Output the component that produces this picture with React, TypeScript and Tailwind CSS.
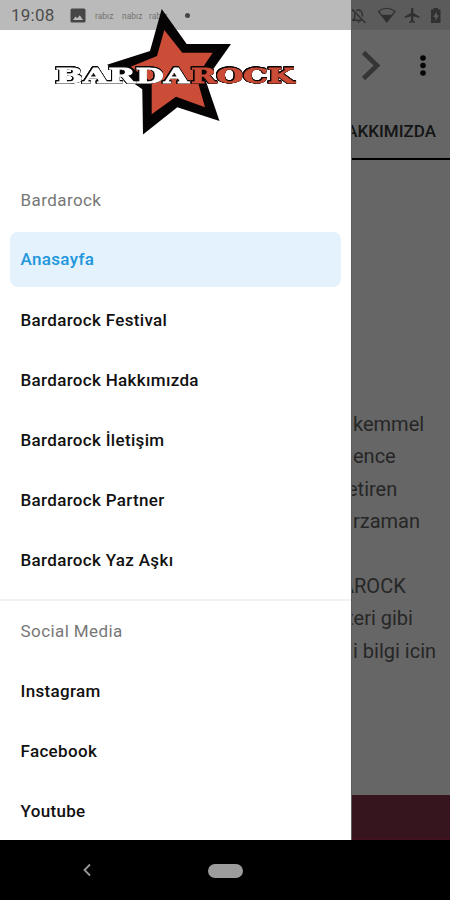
const primaryLinks = [
  "Bardarock Festival",
  "Bardarock Hakkımızda",
  "Bardarock İletişim",
  "Bardarock Partner",
  "Bardarock Yaz Aşkı",
];
const socialLinks = ["Instagram", "Facebook", "Youtube"];

function Logo() {
  return (
    <svg className="absolute left-0 top-0" width="351" height="150" viewBox="0 0 351 150">
      <path d="M161.7 9L186.7 44H231L205.5 80L219.5 121L177.3 107.3L143 134.5L142.3 89.3L107 64.7L150 51Z" fill="#050303" />
      <path d="M164.3 30L182.3 52.7H212.7L196.5 77L205 107.3L176 96.7L151.7 114.3V82L130.7 66.7L157 56Z" fill="#cb4c37" />
      <g
        className="[filter:drop-shadow(0.8px_0_0_#0b0707)_drop-shadow(-0.8px_0_0_#0b0707)_drop-shadow(0_0.8px_0_#0b0707)_drop-shadow(0_-0.8px_0_#0b0707)]"
        fontFamily="DejaVu Serif, serif"
        fontWeight="700"
        fontSize="19.5"
        strokeWidth="0.8"
      >
        <text x="55.5" y="83" fill="#fff" stroke="#fff" textLength="133.5" lengthAdjust="spacingAndGlyphs">BARDA</text>
        <text x="191" y="83" fill="#cb4c37" stroke="#cb4c37" textLength="103.5" lengthAdjust="spacingAndGlyphs">ROCK</text>
      </g>
    </svg>
  );
}

function MenuItem({ label }: { label: string }) {
  return <a className="flex h-[60px] shrink-0 items-center whitespace-nowrap pl-[20.5px] pt-px text-[17px] font-medium text-[#111]">{label}</a>;
}

function Drawer() {
  return (
    <aside className="flex w-[351px] shrink-0 flex-col bg-white tracking-[0.33px]">
      <div className="h-[30px] shrink-0 bg-[#bababa]" />
      <div className="h-[140px] shrink-0" />
      <h2 className="flex h-[60px] shrink-0 items-center pl-[20.5px] pt-px text-[17px] tracking-[0.42px] text-[#777]">Bardarock</h2>
      <div className="flex h-[60px] shrink-0 items-center px-2.5 pb-px">
        <a className="flex h-[55px] w-full items-center rounded-lg bg-[#e3f2fd] pl-[10.5px] pt-px text-[17px] font-medium text-[#2196dc]">Anasayfa</a>
      </div>
      {primaryLinks.map((label) => <MenuItem key={label} label={label} />)}
      <div className="mt-[9px] h-0.5 shrink-0 bg-[#f1f1f1]" />
      <h2 className="flex h-[60px] shrink-0 items-center pl-[20.5px] pt-0.5 text-[17px] tracking-[0.42px] text-[#777]">Social Media</h2>
      <div className="flex flex-col">
        {socialLinks.map((label) => <MenuItem key={label} label={label} />)}
      </div>
    </aside>
  );
}

function PageBehind() {
  return (
    <section className="flex min-w-0 flex-1 flex-col overflow-hidden border-l border-[#5b5b5b] bg-[#666] text-[#262626]">
      <div className="h-[30px] shrink-0 bg-[#5b5b5b]" />
      <div className="flex h-[70px] shrink-0 items-center">
        <svg width="98" height="70" viewBox="0 0 98 70">
          <path d="M11.5 22.5L25 35.5L11.5 48.5" fill="none" stroke="#353535" strokeWidth="4.6" />
          <g fill="#050505">
            <circle cx="71" cy="28" r="2.8" />
            <circle cx="71" cy="35.5" r="2.8" />
            <circle cx="71" cy="43" r="2.8" />
          </g>
        </svg>
      </div>
      <div className="flex h-[60px] shrink-0 items-center justify-end border-b-2 border-black pr-3.5 pt-1.5 text-[17px] font-medium text-[#141414]">
        <span className="whitespace-nowrap">AKKIMIZDA</span>
      </div>
      <div className="mt-[248px] flex flex-col whitespace-nowrap pl-px text-[20px] leading-[32.4px]">
        <span>kemmel</span>
        <span>ence</span>
        <span className="-ml-1.5">etiren</span>
        <span>rzaman</span>
        <span>&nbsp;</span>
        <span className="-ml-3">AROCK</span>
        <span className="-ml-1.5">teri gibi</span>
        <span>i bilgi icin</span>
      </div>
      <div className="mt-auto h-[45px] border-b-2 border-[#421221] bg-[#37151f]" />
    </section>
  );
}

function StatusBar() {
  return (
    <header className="absolute inset-x-0 top-0 flex h-[30px] items-center text-[#4d4d4d]">
      <span className="ml-[11px] w-[46px] whitespace-nowrap pt-0.5 text-[17px] tracking-[0.25px]">19:08</span>
      <svg className="ml-[13px] mt-px" width="16" height="15" viewBox="0 0 16 15">
        <path fillRule="evenodd" d="M2 .5H14Q15.5.5 15.5 2V13Q15.5 14.5 14 14.5H2Q.5 14.5.5 13V2Q.5.5 2 .5ZM3 12H13L9.8 7.2L7.2 10.2L5.6 8.5Z" fill="#464646" />
      </svg>
      <span className="ml-[9px] w-5 pt-0.5 text-[8.5px] text-[#747474]">rabız</span>
      <span className="ml-[7px] w-5 pt-0.5 text-[8.5px] text-[#747474]">nabız</span>
      <span className="ml-[7px] w-5 pt-0.5 text-[8.5px] text-[#747474]">rabız</span>
      <i className="ml-[16px] mt-px size-[5px] rounded-full bg-[#454545]" />
    </header>
  );
}

function SystemIcons() {
  return (
    <svg className="absolute left-[352px] top-0" width="98" height="30" viewBox="352 0 98 30" fill="none" stroke="#303030">
      <path d="M352 9.2L365.5 23" strokeWidth="1.4" />
      <path d="M354.7 13.5V18L352.8 20.2H362M356.2 10.8Q358.3 9.2 360.5 10.6Q362.5 12 362.5 16.5" strokeWidth="1.4" />
      <path d="M357 21.5H360.4Q358.7 24.3 357 21.5Z" fill="#303030" stroke="none" />
      <path d="M378.5 11.5Q386.5 5 395 11.5L386.8 21.8Z" strokeWidth="1.2" />
      <path d="M381.2 14.8H392.5L386.8 22.7Z" fill="#303030" stroke="none" />
      <path d="M411 8.5Q412.2 7 413.3 8.5V13L419.5 16.5V18L413.3 16.3V20.5L415 22V23L412.1 22.2L409.2 23V22L411 20.5V16.3L404.8 18V16.5L411 13Z" fill="#303030" stroke="none" />
      <path fillRule="evenodd" d="M431 9.5H433.5V8H438V9.5H440.5V23H431ZM436.8 11.5L433 17H435.4V21L438.8 15.3H436.8Z" fill="#303030" stroke="none" />
    </svg>
  );
}

function NavigationBar() {
  return (
    <nav className="flex h-[60px] items-center bg-black">
      <svg className="ml-[82px]" width="10" height="14" viewBox="0 0 10 14">
        <path d="M8 1.5L2.5 7L8 12.5" fill="none" stroke="#999" strokeWidth="1.8" />
      </svg>
      <div className="ml-[116px] mt-px h-[14px] w-[35px] rounded-full bg-[#9c9c9c]" />
    </nav>
  );
}

export default function App() {
  return (
    <main className="relative h-[900px] w-[450px] overflow-hidden bg-black font-['Roboto','Noto_Sans',sans-serif]">
      <div className="flex h-[840px] overflow-hidden">
        <Drawer />
        <PageBehind />
      </div>
      <NavigationBar />
      <StatusBar />
      <SystemIcons />
      <Logo />
    </main>
  );
}
